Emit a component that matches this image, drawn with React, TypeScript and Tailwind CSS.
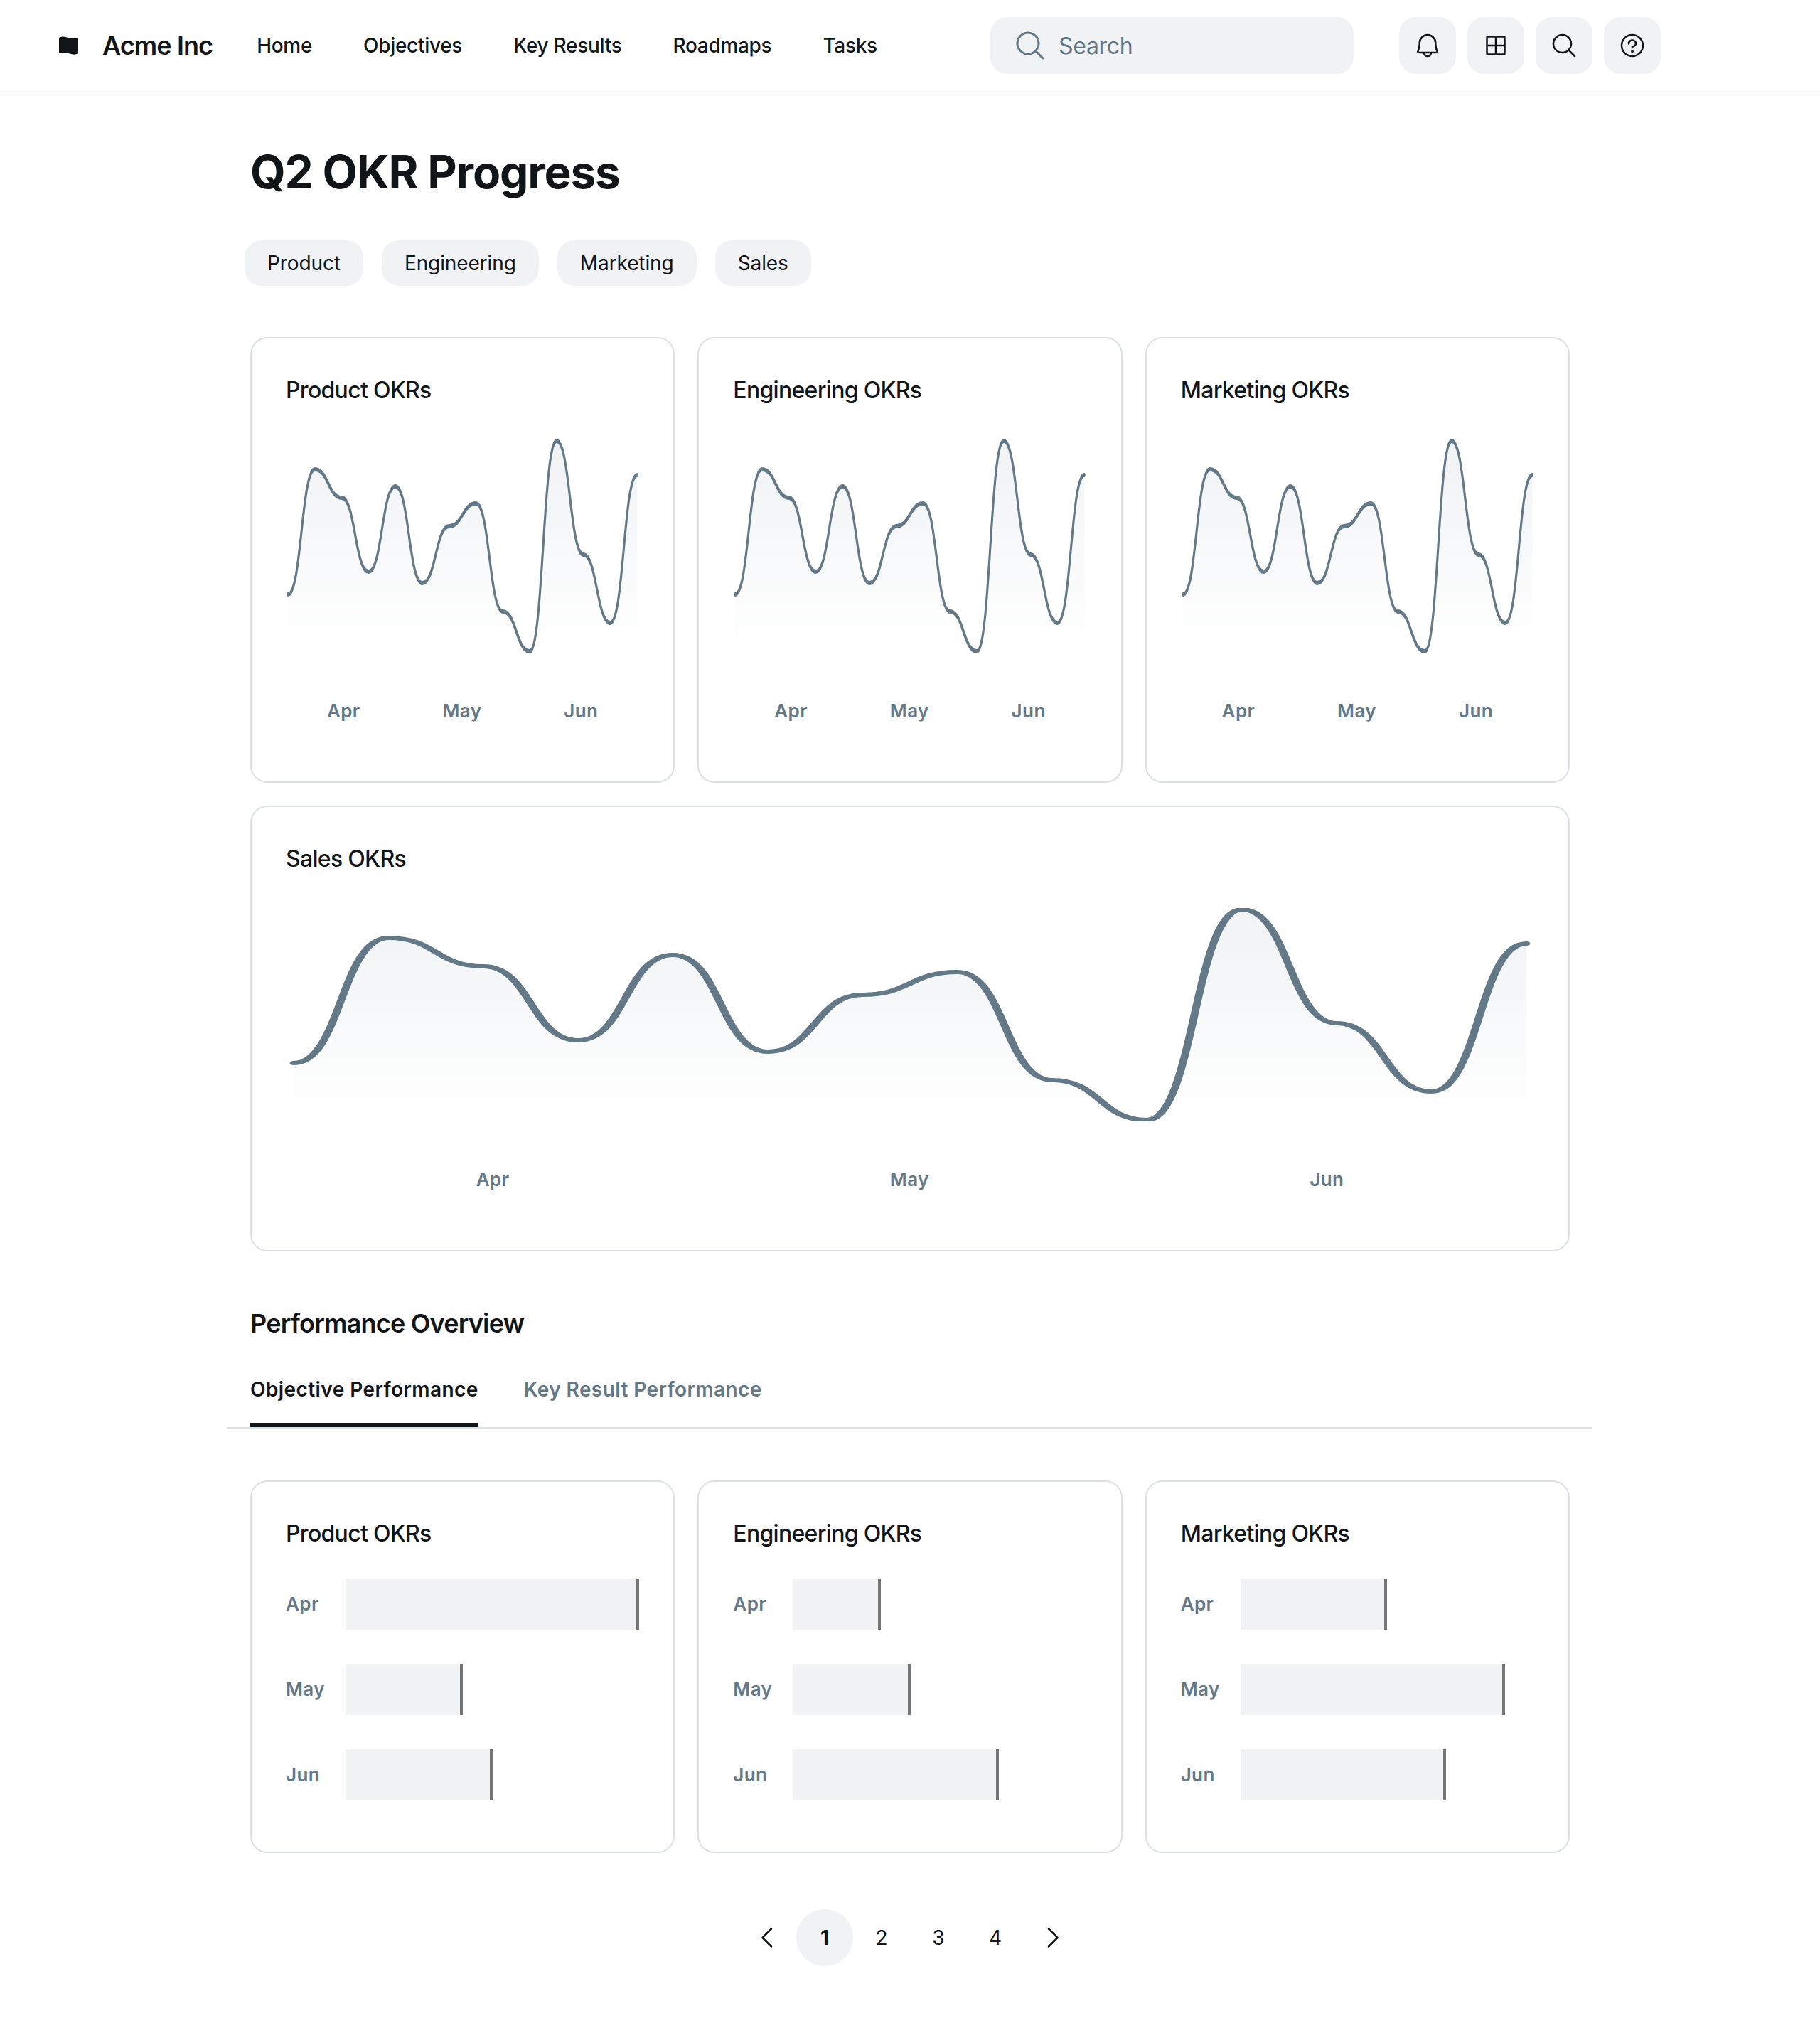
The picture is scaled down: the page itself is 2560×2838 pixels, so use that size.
import { PiBell, PiCaretLeft, PiCaretRight, PiGridFour, PiMagnifyingGlass, PiQuestion } from 'react-icons/pi'

const LINE_PATH =
  'M0 109C18.1538 109 18.1538 21 36.3077 21C54.4615 21 54.4615 41 72.6154 41C90.7692 41 90.7692 93 108.923 93C127.077 93 127.077 33 145.231 33C163.385 33 163.385 101 181.538 101C199.692 101 199.692 61 217.846 61C236 61 236 45 254.154 45C272.308 45 272.308 121 290.462 121C308.615 121 308.615 149 326.769 149C344.923 149 344.923 1 363.077 1C381.231 1 381.231 81 399.385 81C417.538 81 417.538 129 435.692 129C453.846 129 453.846 25 472 25'

const NAV = ['Home', 'Objectives', 'Key Results', 'Roadmaps', 'Tasks']
const CHIPS = ['Product', 'Engineering', 'Marketing', 'Sales']
const MONTHS = ['Apr', 'May', 'Jun']

const BARS = [
  { title: 'Product OKRs', values: [100, 40, 50] },
  { title: 'Engineering OKRs', values: [30, 40, 70] },
  { title: 'Marketing OKRs', values: [50, 90, 70] },
]

function Logo() {
  return (
    <svg viewBox="0 0 27 26" className="ml-[3px] h-[26px] w-[27px] text-[#111518]" fill="currentColor">
      <path d="M0 2C3 .3 7 0 11 1.500C15 3 21 3.200 27 2.400V24.500C23 26 19 26 15 24.500C11 23 5 23 0 24Z" />
    </svg>
  )
}

function IconButton({ children }: { children: React.ReactNode }) {
  return (
    <button className="flex h-20 w-20 items-center justify-center rounded-3xl bg-[#f0f2f4] text-[#111518]">
      {children}
    </button>
  )
}

function Chart({ id }: { id: string }) {
  return (
    <div className="mt-[45px] flex flex-col">
      <svg viewBox="-3 0 478 150" preserveAspectRatio="none" className="h-[300px] w-full" fill="none">
        <path d={`${LINE_PATH}V149H326.769H0V109Z`} fill={`url(#${id})`} />
        <path d={LINE_PATH} stroke="#637988" strokeWidth="3" strokeLinecap="round" />
        <defs>
          <linearGradient id={id} x1="236" y1="1" x2="236" y2="149" gradientUnits="userSpaceOnUse">
            <stop stopColor="#f0f2f4" />
            <stop offset="1" stopColor="#f0f2f4" stopOpacity="0" />
          </linearGradient>
        </defs>
      </svg>
      <div className="mt-[62px] flex justify-around pb-8">
        {MONTHS.map((month) => (
          <p key={month} className="text-[26px] leading-[39px] font-semibold tracking-[0.39px] text-[#637988]">
            {month}
          </p>
        ))}
      </div>
    </div>
  )
}

function ChartCard({ title, id }: { title: string; id: string }) {
  return (
    <div className="rounded-3xl border-2 border-[#dce1e5] p-12">
      <p className="pt-[1px] text-[32px] leading-[48px] font-medium tracking-[-0.7px] text-[#111518]">{title}</p>
      <Chart id={id} />
    </div>
  )
}

function BarCard({ title, values }: { title: string; values: number[] }) {
  return (
    <div className="rounded-3xl border-2 border-[#dce1e5] p-12">
      <p className="pt-[1px] text-[32px] leading-[48px] font-medium tracking-[-0.7px] text-[#111518]">{title}</p>
      <div className="mt-[39px] mb-6 grid grid-cols-[52px_1fr] items-center gap-x-8 gap-y-12">
        {MONTHS.map((month, i) => (
          <div key={month} className="contents">
            <p className="pb-[2px] text-[26px] leading-[39px] font-semibold tracking-[0.39px] text-[#637988]">{month}</p>
            <div className="h-[72px]">
              <div
                className="h-full border-r-4 border-[#757575] bg-[#f0f2f4]"
                style={{ width: `${values[i]}%` }}
              />
            </div>
          </div>
        ))}
      </div>
    </div>
  )
}

export default function App() {
  return (
    <div className="min-h-[2838px] bg-white font-['Inter',sans-serif] text-[#111518]">
      <header className="flex h-[130px] items-center justify-between border-b-2 border-[#f0f2f4] pr-[224px] pl-20">
        <div className="flex items-center gap-[62px]">
          <div className="flex items-center gap-[34px]">
            <Logo />
            <h2 className="text-[36px] leading-[45px] font-semibold tracking-[-0.9px]">Acme Inc</h2>
          </div>
          <nav className="flex items-center gap-[72px]">
            {NAV.map((item) => (
              <a key={item} className="text-[28px] leading-[42px] font-medium tracking-[-0.3px]">
                {item}
              </a>
            ))}
          </nav>
        </div>
        <div className="flex items-center gap-4">
          <div className="mr-12 flex h-20 w-[511px] items-center gap-4 rounded-3xl bg-[#f0f2f4] pl-8 text-[#637988]">
            <PiMagnifyingGlass size={48} />
            <span className="pt-[2px] text-[32px] leading-[48px] font-normal tracking-[-0.3px]">Search</span>
          </div>
          <IconButton>
            <PiBell size={40} />
          </IconButton>
          <IconButton>
            <PiGridFour size={40} />
          </IconButton>
          <IconButton>
            <PiMagnifyingGlass size={40} />
          </IconButton>
          <IconButton>
            <PiQuestion size={40} />
          </IconButton>
        </div>
      </header>

      <main className="mx-auto w-[1920px] pt-10">
        <div className="p-8">
          <h1 className="text-[64px] leading-[80px] font-bold tracking-[-1.2px]">Q2 OKR Progress</h1>
        </div>
        <div className="flex gap-[26px] px-6 pt-6 pb-[72px]">
          {CHIPS.map((chip) => (
            <div
              key={chip}
              className="flex h-16 items-center rounded-3xl bg-[#f0f2f4] px-8 text-[28px] leading-[42px] font-normal tracking-[-0.1px]"
            >
              {chip}
            </div>
          ))}
        </div>

        <div className="flex flex-col gap-8 px-8">
          <div className="grid grid-cols-3 gap-8">
            <ChartCard title="Product OKRs" id="fill-product" />
            <ChartCard title="Engineering OKRs" id="fill-engineering" />
            <ChartCard title="Marketing OKRs" id="fill-marketing" />
          </div>
          <ChartCard title="Sales OKRs" id="fill-sales" />
        </div>

        <h2 className="mt-[79px] px-8 text-[36px] leading-[45px] font-semibold tracking-[-0.8px]">Performance Overview</h2>

        <div className="mt-[34px] flex gap-16 border-b-2 border-[#dce1e5] px-8">
          <a className="h-[89px] border-b-[6px] border-[#111518] pt-[15px] text-[28px] leading-[42px] font-semibold tracking-[0.42px]">
            Objective Performance
          </a>
          <a className="h-[89px] border-b-[6px] border-transparent pt-[15px] text-[28px] leading-[42px] font-semibold tracking-[0.42px] text-[#637988]">
            Key Result Performance
          </a>
        </div>

        <div className="mt-[73px] grid grid-cols-3 gap-8 px-8">
          {BARS.map((card) => (
            <BarCard key={card.title} title={card.title} values={card.values} />
          ))}
        </div>

        <div className="mt-[79px] flex items-center justify-center">
          <button className="flex h-20 w-20 items-center justify-center">
            <PiCaretLeft size={40} />
          </button>
          <button className="flex h-20 w-20 items-center justify-center rounded-full bg-[#f0f2f4] text-[28px] font-bold">1</button>
          <button className="flex h-20 w-20 items-center justify-center text-[28px]">2</button>
          <button className="flex h-20 w-20 items-center justify-center text-[28px]">3</button>
          <button className="flex h-20 w-20 items-center justify-center text-[28px]">4</button>
          <button className="flex h-20 w-20 items-center justify-center">
            <PiCaretRight size={40} />
          </button>
        </div>
      </main>
    </div>
  )
}
